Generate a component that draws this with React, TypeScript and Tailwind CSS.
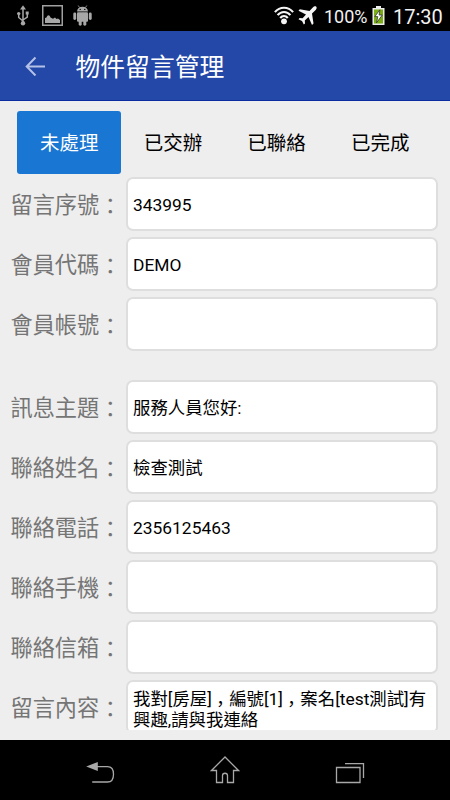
import React from 'react';
import { clsx } from 'clsx';

interface Field {
  label: string;
  value: string;
}

const tabs = ['未處理', '已交辦', '已聯絡', '已完成'];

const messageFields: Field[] = [
  { label: '留言序號', value: '343995' },
  { label: '會員代碼', value: 'DEMO' },
  { label: '會員帳號', value: '' },
];

const contactFields: Field[] = [
  { label: '訊息主題', value: '服務人員您好:' },
  { label: '聯絡姓名', value: '檢查測試' },
  { label: '聯絡電話', value: '2356125463' },
  { label: '聯絡手機', value: '' },
  { label: '聯絡信箱', value: '' },
  { label: '留言內容', value: '我對[房屋]，編號[1]，案名[test測試]有興趣,請與我連絡' },
];

function UsbIcon() {
  return (
    <svg width="12" height="21" viewBox="0 0 12 21" fill="none" stroke="#a8a8a8" strokeWidth="1.5">
      <path d="M6 3v15M6 16 1.700 12.500V9M6 15l4.300-3V7.500" />
      <path d="M6 .300 9 4.500H3Z" fill="#a8a8a8" stroke="none" />
      <circle cx="1.700" cy="8.600" r="1.700" fill="#a8a8a8" stroke="none" />
      <path d="M8.700 6.500h3v3h-3z" fill="#a8a8a8" stroke="none" />
      <circle cx="6" cy="18.300" r="2.200" fill="#a8a8a8" stroke="none" />
    </svg>
  );
}

function PictureIcon() {
  return (
    <svg width="21" height="21" viewBox="0 0 21 21">
      <rect x=".75" y=".75" width="19.5" height="19.5" fill="none" stroke="#a0a0a0" strokeWidth="1.5" />
      <path d="M3 18v-5l1.500-.5c1-3 3-3 4 0l2.500 1.300 2-1.300 1.500 1.500 1.500-.5 2 1.500V18Z" fill="#a8a8a8" />
    </svg>
  );
}

function AndroidIcon() {
  return (
    <svg width="19" height="21" viewBox="0 0 19 21" fill="#a8a8a8">
      <path d="M4 6.600C4.200 3.600 6.300 1.800 9.500 1.800S14.800 3.600 15 6.600Z" />
      <path d="M6.500 2.500 5.200.500M12.500 2.500 13.800.500" stroke="#a8a8a8" strokeWidth=".8" />
      <rect x="4" y="7.300" width="11" height="9.500" rx="1" />
      <rect x="0.300" y="7.500" width="2.900" height="7.500" rx="1.400" />
      <rect x="15.800" y="7.500" width="2.900" height="7.500" rx="1.400" />
      <rect x="5.700" y="14" width="3" height="6.700" rx="1.400" />
      <rect x="10.300" y="14" width="3" height="6.700" rx="1.400" />
      <circle cx="7.200" cy="4.400" r=".7" fill="#000" />
      <circle cx="11.800" cy="4.400" r=".7" fill="#000" />
    </svg>
  );
}

function WifiIcon() {
  return (
    <svg width="20" height="19" viewBox="0 0 20 19" fill="none" stroke="#f5f5f5" strokeWidth="2.1">
      <path d="M.9 6.200C5.800.200 14.200.200 19.100 6.200" />
      <path d="M3.600 9.200C7.100 4.900 12.900 4.900 16.400 9.200" />
      <path d="M6.200 12C8.400 9.400 11.600 9.400 13.800 12" />
      <circle cx="10" cy="15.300" r="2.900" fill="#f5f5f5" stroke="none" />
    </svg>
  );
}

function AirplaneIcon() {
  return (
    <svg width="19" height="20" viewBox="0 0 19 20" fill="#f5f5f5">
      <path d="M18.300.700C17.300-.200 15.800.500 14.800 1.500L11.500 4.900 1.800 3.300.500 4.800 8 8.500 4.600 12.300 1.600 12 .500 13.200 4 15 5.800 18.600 7 17.500 6.800 14.500 10.500 11.100 14 18.900 15.500 17.500 14 7.600 17.400 4.200C18.400 3.200 19.100 1.600 18.300.700Z" />
    </svg>
  );
}

function BatteryIcon() {
  return (
    <svg width="13" height="19" viewBox="0 0 13 19">
      <path d="M4 0h5v2h3.500v17H.5V2H4Z" fill="#ececec" />
      <path d="M2 3.500h9v14H2Z" fill="#79ad12" />
      <path d="M7.900 3.800 2.800 10.600h3L4.500 16.800 10.300 9H7.100Z" fill="#fff" stroke="#333" strokeWidth=".8" />
    </svg>
  );
}

function StatusBar() {
  return (
    <div className="flex h-[31px] shrink-0 items-center bg-black text-[#f2f2f2]">
      <div className="flex items-center pl-[17px]">
        <UsbIcon />
        <div className="ml-[13px]">
          <PictureIcon />
        </div>
        <div className="ml-2.5">
          <AndroidIcon />
        </div>
      </div>
      <div className="ml-auto flex items-center pr-2">
        <WifiIcon />
        <div className="ml-1">
          <AirplaneIcon />
        </div>
        <span className="ml-[7px] w-[42px] pt-[2px] text-[18px] leading-none whitespace-nowrap">100%</span>
        <div className="ml-[6px]">
          <BatteryIcon />
        </div>
        <span className="ml-2 w-[49px] pt-[2px] text-[20px] leading-none whitespace-nowrap">17:30</span>
      </div>
    </div>
  );
}

function AppBar() {
  return (
    <header className="flex h-[70px] shrink-0 items-center border-b border-[#0b2ba0] bg-[#2348a8]">
      <svg className="ml-[25px]" width="21" height="20" viewBox="0 0 21 20" fill="none" stroke="#b5c1e6" strokeWidth="2">
        <path d="M20 10.500H2M10.500 1.500 1.700 10.500l8.800 9" />
      </svg>
      <h1 className="ml-[29.500px] pt-[5px] text-[24.800px] leading-none text-white">物件留言管理</h1>
    </header>
  );
}

// Half-width alternate with even side space, so the mark stands in the middle of its cell
function Punctuation({ mark }: { mark: string }) {
  return (
    <span className="px-[0.25em] font-[Roboto,'Noto_Sans_CJK_SC',sans-serif] [font-feature-settings:'halt']">
      {mark}
    </span>
  );
}

function FieldText({ text }: { text: string }) {
  return (
    <span>
      {text.split('，').map((part, index) => (
        <React.Fragment key={index}>
          {index > 0 && <Punctuation mark="，" />}
          {part}
        </React.Fragment>
      ))}
    </span>
  );
}

function FieldRow({ label, value }: Field) {
  const multiline = value.length > 15;

  return (
    <div className="flex h-[54px] shrink-0 items-center">
      <label className="w-[115.500px] pt-[2px] text-[22.200px] leading-none whitespace-nowrap text-[#757575]">
        {label}
        <Punctuation mark="：" />
      </label>
      <div
        className={clsx(
          'flex h-[54px] w-[312px] rounded-[7px] border-2 border-[#dedede] bg-white px-[5px] text-[17.400px] text-black',
          multiline ? 'items-start pt-[7px] leading-[20.500px]' : 'items-center pt-[2px]',
        )}
      >
        <FieldText text={value} />
      </div>
    </div>
  );
}

function NavBar() {
  return (
    <nav className="flex h-[60px] shrink-0 items-center bg-black pl-[85px]">
      <svg width="30" height="30" viewBox="0 0 30 30" fill="none" stroke="#a8a8a8" strokeWidth="1.300">
        <path d="M12 11.700h10.500c4.500 0 6 3.500 6 7.500s-1.500 7.800-6 7.800H7.200" />
        <path d="M1.200 11.500 12.800 7v9Z" fill="#a8a8a8" stroke="none" />
      </svg>
      <svg className="ml-[95px]" width="30" height="30" viewBox="0 0 30 30" fill="none" stroke="#a8a8a8" strokeWidth="1.300">
        <path d="M15 2 1.500 15.500h5v12h6v-7c0-3 5-3 5 0v7h6v-12h5Z" />
      </svg>
      <svg className="ml-[95px]" width="30" height="30" viewBox="0 0 30 30" fill="none" stroke="#a8a8a8" strokeWidth="1.300">
        <path d="M1.500 12.500h23.500v15H1.500ZM10 8.700h18.500v14.300" />
      </svg>
    </nav>
  );
}

export default function App() {
  const [activeTab, setActiveTab] = React.useState(0);

  return (
    <div className="flex h-[800px] w-[450px] flex-col overflow-hidden bg-[#eeeeee] font-[Roboto,'Noto_Sans_CJK_TC',sans-serif]">
      <StatusBar />
      <AppBar />

      <div className="mt-2.5 ml-[17.400px] flex h-[63px] shrink-0">
        {tabs.map((tab, index) => (
          <button
            key={tab}
            onClick={() => setActiveTab(index)}
            className={clsx(
              'w-[103.700px] rounded-[3px] pt-[3px] text-[19.500px]',
              index === activeTab ? 'bg-[#1976d2] text-white' : 'text-black',
            )}
          >
            {tab}
          </button>
        ))}
      </div>

      <main className="mt-[3px] mb-2.5 flex min-h-0 flex-1 flex-col overflow-hidden pl-[10.500px]">
        <div className="flex shrink-0 flex-col gap-1.5">
          {messageFields.map((field) => (
            <FieldRow key={field.label} {...field} />
          ))}
        </div>
        <div className="mt-[29px] flex shrink-0 flex-col gap-1.5">
          {contactFields.map((field) => (
            <FieldRow key={field.label} {...field} />
          ))}
        </div>
      </main>

      <NavBar />
    </div>
  );
}
